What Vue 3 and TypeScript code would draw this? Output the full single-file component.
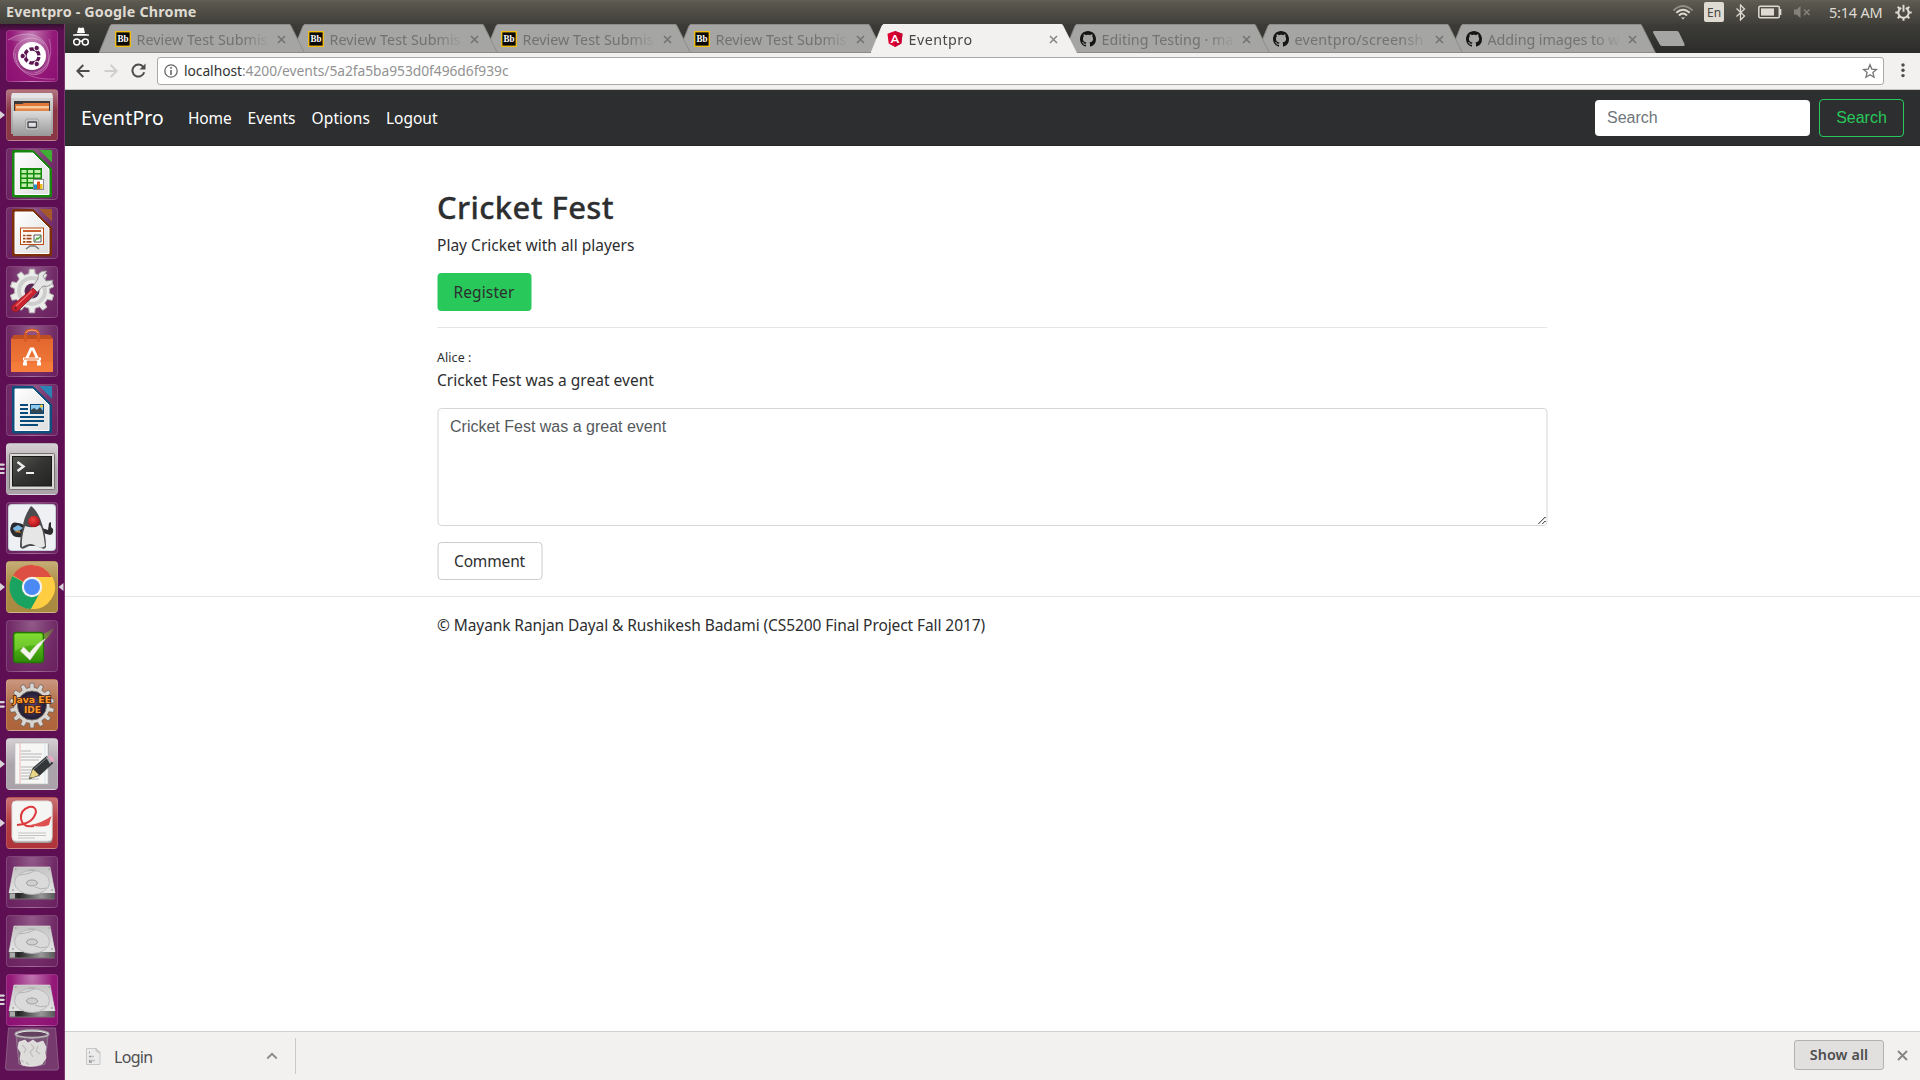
<script setup lang="ts">
import type { Directive } from 'vue'

// Sets the tracking of a label so that it takes the given width in pixels.
const vFit: Directive<HTMLElement, number> = {
  mounted(el, binding) {
    const count = (el.textContent ?? '').trim().length
    const natural = el.getBoundingClientRect().width
    el.style.letterSpacing = `${((binding.value - natural) / count).toFixed(3)}px`
  },
}

interface Tab { title: string; icon: 'bb' | 'ng' | 'gh'; width: number; active?: boolean }
const tabs: Tab[] = [
  { title: 'Review Test Submis', icon: 'bb', width: 131 },
  { title: 'Review Test Submis', icon: 'bb', width: 131 },
  { title: 'Review Test Submis', icon: 'bb', width: 131 },
  { title: 'Review Test Submis', icon: 'bb', width: 131 },
  { title: 'Eventpro', icon: 'ng', width: 64, active: true },
  { title: 'Editing Testing · ma', icon: 'gh', width: 132 },
  { title: 'eventpro/screensh', icon: 'gh', width: 129 },
  { title: 'Adding images to w', icon: 'gh', width: 132 },
]

interface Tile { kind: string; bg: string; pips?: number; focused?: boolean }
const tiles: Tile[] = [
  { kind: 'dash', bg: 'magenta' },
  { kind: 'files', bg: 'red', pips: 1 },
  { kind: 'calc', bg: 'glass' },
  { kind: 'impress', bg: 'glass' },
  { kind: 'settings', bg: 'glass' },
  { kind: 'software', bg: 'glass' },
  { kind: 'writer', bg: 'glass' },
  { kind: 'terminal', bg: 'grey', pips: 3 },
  { kind: 'duke', bg: 'glass' },
  { kind: 'chrome', bg: 'gold', pips: 1, focused: true },
  { kind: 'check', bg: 'glass' },
  { kind: 'eclipse', bg: 'copper', pips: 2 },
  { kind: 'gedit', bg: 'grey', pips: 1 },
  { kind: 'pdf', bg: 'crimson', pips: 1 },
  { kind: 'disk', bg: 'glass' },
  { kind: 'disk', bg: 'glass' },
  { kind: 'disk', bg: 'magenta', pips: 3 },
]

function gear(cx: number, cy: number, outer: number, inner: number, teeth: number): string {
  const step = (Math.PI * 2) / teeth
  const points: string[] = []
  for (let i = 0; i < teeth; i++) {
    const a = i * step - Math.PI / 2
    const corners: [number, number][] = [
      [-0.29, inner], [-0.19, outer], [0.19, outer], [0.29, inner],
    ]
    for (const [o, r] of corners) {
      points.push(`${(cx + r * Math.cos(a + o * step)).toFixed(2)} ${(cy + r * Math.sin(a + o * step)).toFixed(2)}`)
    }
  }
  return `M${points.join('L')}Z`
}
const docColors: Record<string, string[]> = {
  calc: ['#16860f', '#3fae35'],
  impress: ['#7c3009', '#a4582c'],
  writer: ['#0d4f7d', '#2a83b5'],
}
</script>

<template>
  <div class="desktop">
    <svg class="defs" width="0" height="0">
      <defs>
        <linearGradient id="metal" x1="0" y1="0" x2="0" y2="1"><stop offset="0" stop-color="#dcdcdc" /><stop offset="1" stop-color="#989898" /></linearGradient>
        <linearGradient id="plate" x1="0" y1="0" x2="0" y2="1"><stop offset="0" stop-color="#c4c4c4" /><stop offset="1" stop-color="#e4e4e4" /></linearGradient>
        <linearGradient id="paper" x1="0" y1="0" x2="1" y2="1"><stop offset="0" stop-color="#fff" /><stop offset="1" stop-color="#dedede" /></linearGradient>
        <linearGradient id="screen" x1="0" y1="0" x2="1" y2="1"><stop offset="0" stop-color="#55564f" /><stop offset=".5" stop-color="#343533" /><stop offset="1" stop-color="#232422" /></linearGradient>
        <linearGradient id="bag" x1="0" y1="0" x2="0" y2="1"><stop offset="0" stop-color="#e0652f" /><stop offset="1" stop-color="#f47a38" /></linearGradient>
        <linearGradient id="green" x1="0" y1="0" x2="0" y2="1"><stop offset="0" stop-color="#6ed51f" /><stop offset="1" stop-color="#2f8c08" /></linearGradient>
        <linearGradient id="streak" x1="0" y1="1" x2="1" y2="0"><stop offset="0" stop-color="#72c414" /><stop offset="1" stop-color="#72c414" stop-opacity=".1" /></linearGradient>
        <linearGradient id="rim" x1="0" y1="0" x2="1" y2="0"><stop offset="0" stop-color="#666" /><stop offset=".2" stop-color="#222" /><stop offset=".7" stop-color="#999" /><stop offset="1" stop-color="#555" /></linearGradient>
        <radialGradient id="ball" cx=".4" cy=".35" r=".6"><stop offset="0" stop-color="#f3443f" /><stop offset="1" stop-color="#b01218" /></radialGradient>
        <radialGradient id="planet"><stop offset="0" stop-color="#584877" /><stop offset="1" stop-color="#1e1930" /></radialGradient>
      </defs>
    </svg>

    <header class="panel">
      <span class="window-title"><span v-fit="190.5">Eventpro - Google Chrome</span></span>
      <div class="indicators">
        <svg class="wifi" width="22" height="16" viewBox="0 0 22 16" fill="none" stroke="#dfdbd2" stroke-width="1.9">
          <path d="M1.5 6.5Q11-2.5 20.500 6.500" stroke="#908d85" /><path d="M4.300 8.800Q11 2.500 17.700 8.800" /><path d="M7 11.500Q11 7.700 15 11.500" /><path d="M9 13.500h4l-2 2z" fill="#dfdbd2" stroke="none" />
        </svg>
        <span class="lang">En</span>
        <svg class="bluetooth" width="11" height="17" viewBox="0 0 11 17" fill="none" stroke="#dfdbd2" stroke-width="1.3"><path d="M1.500 4.500l8 7.500-4 4V1l4 4-8 7.500" /></svg>
        <svg class="battery" width="25" height="14" viewBox="0 0 25 14"><rect x=".8" y="1.300" width="20.500" height="11.400" rx="1.500" fill="none" stroke="#dfdbd2" stroke-width="1.500" /><path d="M22.500 4v6" stroke="#dfdbd2" stroke-width="1.700" /><rect x="3" y="3.400" width="13" height="7.200" fill="#dfdbd2" /></svg>
        <svg class="muted" width="19" height="14" viewBox="0 0 19 14" fill="#85827a"><path d="M1 4.500h2.500L7.500 1v12l-4-3.500H1z" /><path d="M11 4.500l5.500 5.500m0-5.500L11 10" stroke="#85827a" stroke-width="1.500" /></svg>
        <span class="clock"><span v-fit="53.5">5:14 AM</span></span>
        <svg class="power" width="17" height="17" viewBox="0 0 17 17" fill="none" stroke="#dfdbd2"><path d="M6.300 3.900A5.200 5.200 0 1 0 10.700 3.900" stroke-width="2" /><path d="M8.500 .8v7" stroke-width="1.900" /><path d="M.3 8.500h2.700m11 0h2.700M2.700 2.700l2 2M14.300 2.700l-2 2M2.700 14.300l2-2m7.600 0l2 2M8.500 14v2.700" stroke-width="2" /></svg>
      </div>
    </header>

    <div class="workspace">
      <nav class="launcher">
        <div v-for="(tile, i) in tiles" :key="i" class="tile" :class="tile.bg">
          <svg v-if="tile.pips" class="pips" width="6" height="14" viewBox="0 0 6 14" fill="#d9d3d8">
            <path v-if="tile.pips === 1" d="M0 3l5 4-5 4z" />
            <path v-else-if="tile.pips === 2" d="M0 3h4l1 1-1 1.200H0zM0 7.500h4l1 1-1 1.200H0z" />
            <path v-else d="M0 1.500h4l1 1-1 1.200H0zM0 5.700h4l1 1-1 1.200H0zM0 9.900h4l1 1-1 1.200H0z" />
          </svg>
          <svg v-if="tile.focused" class="focus" width="6" height="14" viewBox="0 0 6 14"><path d="M5.500 3l-5 4 5 4z" fill="#d9d3d8" /></svg>
          <svg class="art" width="52" height="52" viewBox="0 0 52 52">
            <g v-if="tile.kind === 'dash'">
              <path d="M2 10C24-4 45 8 43 30C42 42 30 48 22 43C12 40 4 28 9 18C13 8 30 4 38 14" fill="#fff" fill-opacity=".16" stroke="#fff" stroke-opacity=".3" />
              <path d="M9 23C10 42 24 50 49 49M43 9C48 24 42 40 29 43" fill="none" stroke="#fff" stroke-opacity=".28" />
              <circle cx="26" cy="27.500" r="14" fill="#3a0833" opacity=".35" /><circle cx="26" cy="26" r="14" fill="#fff" />
              <circle cx="26" cy="26" r="7" fill="none" stroke="#5d1751" stroke-width="3.400" stroke-dasharray="12.660 2" stroke-dashoffset="-1" />
              <g fill="#5d1751" stroke="#fff" stroke-width="1"><circle cx="16.700" cy="26" r="2.700" /><circle cx="30.700" cy="18" r="2.700" /><circle cx="30.700" cy="34" r="2.700" /></g>
            </g>
            <g v-else-if="tile.kind === 'files'">
              <path d="M5 11L6 4h40l1 7v34H5z" fill="url(#metal)" /><path d="M5 9L6 4h40l1 5z" fill="#e4e4e4" />
              <rect x="8" y="12" width="36" height="10" fill="#3c3b39" />
              <path d="M9 15h7l2-1h25v8H9z" fill="#e07638" /><path d="M10 17h33v5H10z" fill="#f2a264" /><path d="M10 18h33" stroke="#fff2dc" stroke-width="1" /><path d="M10 21h33" stroke="#d46a2a" />
              <path d="M7 22h38v25H7z" fill="url(#metal)" /><rect x="19.500" y="30" width="13" height="11" rx="2" fill="#c9c9c9" stroke="#a2a2a2" /><rect x="22" y="33" width="8.500" height="5.500" rx=".6" fill="#e1e1e1" stroke="#42424a" stroke-width="1.300" />
            </g>
            <g v-else-if="docColors[tile.kind]">
              <path d="M7.500 2H27l19 18.500V47.500a2 2 0 0 1-2 2H8a2 2 0 0 1-2-2v-44Q6 2 7.500 2z" :fill="docColors[tile.kind][0]" />
              <path d="M33.500 2H45q1 0 1 1v11.500Q41 10 33.500 2z" :fill="docColors[tile.kind][1]" />
              <path d="M9 5h18l16 16v25.500H9z" fill="url(#paper)" stroke="#fff" />
              <template v-if="tile.kind === 'calc'">
                <rect x="14" y="20" width="22" height="21" fill="#128b0c" /><path d="M15.500 22h5v3h-5zm6.500 0h5v3h-5zm6.500 0h6v3h-6zM15.500 26.500h5v3h-5zm6.500 0h5v3h-5zm6.500 0h6v3h-6zM15.500 31h5v3h-5zm6.500 0h5v3h-5zM15.500 35.500h5v3.500h-5zm6.500 0h5v3.500h-5z" fill="#c1edaa" />
                <rect x="27.500" y="31.500" width="10" height="10" fill="#fff" stroke="#8a8a8a" /><path d="M28 36.500h3v4.500h-3z" fill="#1795c9" /><path d="M31 33.500h3V41h-3z" fill="#d95416" /><path d="M34 36h2.500v5H34z" fill="#ecbd23" />
              </template>
              <template v-else-if="tile.kind === 'impress'">
                <path d="M20 42l4-3h5l4 3" fill="none" stroke="#777" stroke-width="1.500" /><rect x="14.500" y="21" width="23" height="16.500" fill="#fffaf3" stroke="#b94c18" /><path d="M17 24h18" stroke="#c6622d" stroke-width="2" /><path d="M17 28.500h2.500m1 0h5m-8.500 3.200h2.500m1 0h5m-8.500 3.200h2.500m1 0h5" stroke="#9d4a20" stroke-width="1.700" /><path d="M28 28h7v7h-7z" fill="#fff" stroke="#555" /><path d="M29 34l2-3 1 1 3-3" fill="none" stroke="#43a53c" stroke-width="1.300" />
              </template>
              <template v-else>
                <path d="M14 21h8m-8 4h8m-8 4h8M14 33h24M14 37h24M14 41h18" stroke="#0a4c79" stroke-width="2" /><rect x="24.500" y="20.500" width="13" height="9" fill="#8dcaf0" stroke="#0b4a74" /><path d="M25 29v-3l3-2 3 2 3-3 3 4v2z" fill="#334750" /><circle cx="35.500" cy="22" r="1.500" fill="#f1cd3b" />
              </template>
            </g>
            <g v-else-if="tile.kind === 'settings'">
              <path :d="gear(26, 25, 22, 17.5, 10)" fill="#ececeb" stroke="#b7b5b5" /><circle cx="26" cy="25" r="13" fill="none" stroke="#cfcecf" stroke-width="4" /><circle cx="26" cy="25" r="7.500" fill="#5b2653" />
              <path d="M32 13Q31 4 41 5l-4 5 3 5 7-1Q46 22 37 20L22 36l-4-3z" fill="#e5e5e5" stroke="#888" stroke-width=".8" /><path d="M27 22l4 4-19 19q-3 2-6-1-1-4 1-5z" fill="#cb2330" stroke="#8d1420" stroke-width=".8" /><path d="M26 25L10 40" stroke="#ee6a6c" stroke-width="1.300" /><circle cx="9.500" cy="42.500" r="1.400" fill="#772030" />
            </g>
            <g v-else-if="tile.kind === 'software'">
              <path d="M5 14l3-4h36l3 4v33H5z" fill="url(#bag)" /><path d="M5 14l3-4h36l3 4z" fill="#bf4e20" /><path d="M5 37h42v10H5z" fill="#ff9147" opacity=".25" /><path d="M19.500 17V9q0-4 6.500-4t6.500 4v8" fill="none" stroke="#d65924" stroke-width="2.500" /><path d="M20 8q1-3 6-3t6 3" fill="none" stroke="#f9a273" />
              <path d="M18.500 38L25 24h2l6.500 14M17 34h18M17 39h4m10 0h4" fill="none" stroke="#fff" stroke-width="2.800" /><path d="M18 34h15" stroke="#f06c2c" />
            </g>
            <g v-else-if="tile.kind === 'terminal'">
              <rect x="3.500" y="10.500" width="45" height="36" rx="1" fill="#dbdad8" stroke="#75716f" /><rect x="6.500" y="13.500" width="39" height="29.500" fill="url(#screen)" stroke="#171917" /><path d="M11.500 19l6 4.500-6 4.500" fill="none" stroke="#f0f0f0" stroke-width="2.400" /><path d="M20 30h8" stroke="#f0f0f0" stroke-width="2" />
            </g>
            <g v-else-if="tile.kind === 'duke'">
              <rect x="2" y="2" width="48" height="47" rx="4" fill="#c5ccd6" /><rect x="3" y="3" width="46" height="45" rx="3" fill="#eff0f4" />
              <path d="M5 24q1-5 7-3 6 0 8 6l-4 8q-8 1-10-3-3-4-1-8z" fill="#292b30" /><path d="M7 26l5-3 5 3-4 3q-5 1-6-3z" fill="#79b7e5" /><path d="M8 30l5-2 2 3z" fill="#bd7b34" />
              <path d="M36 26l6 2 1-7 2-1v5l2 2q1 5-3 6l-7-2z" fill="#2c2c2e" /><path d="M25 4Q17 16 17 25q-3 9-3 20 2 3 5 1l4-2 7 0 5 2q4 2 5-1 0-12-4-23Q32 9 25 4z" fill="#4c4c4e" /><path d="M19 24q-4 12-3 21 8-5 12-2 7 5 11 1-2-18-5-21-7 4-15 1z" fill="#e6e6e6" /><circle cx="28" cy="19.500" r="5.800" fill="url(#ball)" />
            </g>
            <g v-else-if="tile.kind === 'chrome'">
              <circle cx="26" cy="26" r="22" fill="#ffcd42" /><path d="M26 26L7 14.500A22 22 0 0 1 45.500 16H26z" fill="#dd4f43" /><path d="M26 26L6.500 15A22 22 0 0 0 25 48l9.500-17z" fill="#1aa261" /><path d="M26 16h20.500A22 22 0 0 1 25 48l9.500-17z" fill="#ffcd42" /><circle cx="26" cy="26" r="10.200" fill="#f1f1f1" /><circle cx="26" cy="26" r="8" fill="#4b89f4" />
            </g>
            <g v-else-if="tile.kind === 'check'">
              <path d="M33 25Q44 17 49 7q-7 5-14 8z" fill="url(#streak)" /><rect x="7.500" y="12.500" width="30" height="30" rx="3" fill="url(#green)" stroke="#247407" stroke-width="1.300" /><path d="M9 14h27v12q-14-3-27 5z" fill="#a1e953" opacity=".4" /><path d="M14.500 31l3-4 6 6Q30 24 39 19L24 40z" fill="#f6f6ef" stroke="#dadad0" stroke-width=".8" />
            </g>
            <g v-else-if="tile.kind === 'eclipse'">
              <path :d="gear(26, 26.500, 22.5, 18, 14)" fill="#d8d5d1" stroke="#655f5b" stroke-width=".7" /><circle cx="26" cy="26.500" r="14.500" fill="url(#planet)" stroke="#746d69" />
              <g class="badge-text"><text x="7" y="23.500" textLength="38" lengthAdjust="spacingAndGlyphs">Java EE</text><text x="18" y="33.500" textLength="17" lengthAdjust="spacingAndGlyphs">IDE</text></g>
            </g>
            <g v-else-if="tile.kind === 'gedit'">
              <path d="M10 6h33v41H10z" fill="#aaa8a9" /><path d="M9 5h33v41H9z" fill="#f6f6f5" stroke="#bbb" stroke-width=".6" /><path d="M14 5v41" stroke="#eeb6b1" /><path d="M39 5v41" stroke="#d5e6ef" /><path d="M15 13h10m-10 3h21m-21 3h20m-20 3h18m-18 7h13m-13 3h18m-18 3h9m-9 3h19m-19 3h18" stroke="#a6a6a6" stroke-width=".8" /><path d="M27 30L41 18l6 7-13 12-11 4z" fill="#33373a" stroke="#1d1d1d" stroke-width=".5" /><path d="M40 19l3-2 4 5-3 4z" fill="#b3b0b3" /><path d="M42 18q3-2 6 4-1 3-2 2z" fill="#f0a7c4" /><path d="M27 31l6 6-10 4z" fill="#ead586" /><path d="M25 39l-2 2 3-1z" fill="#222" /><path d="M28 31l14-12" stroke="#858a8b" />
            </g>
            <g v-else-if="tile.kind === 'pdf'">
              <rect x="6.500" y="5" width="40" height="41" rx="4" fill="#9e9d9b" /><rect x="6" y="4" width="40" height="40" rx="4" fill="#f5f5f3" stroke="#ddd" />
              <path d="M11 28Q27 27 30 15Q30 9 23 10Q14 13 15 22Q17 31 28 29" fill="none" stroke="#dc3a3d" stroke-width="2" /><path d="M24 28Q36 26 45.500 19L43 28Q36 31 24 28z" fill="#df5050" /><path d="M12 36h28m-28 2.500h28m-28 2.500h17" stroke="#c4c4c2" />
            </g>
            <g v-else-if="tile.kind === 'disk'">
              <path d="M8 12h36l5 24v6q0 1.500-2 1.500H5q-2 0-2-1.500v-6z" fill="#757575" /><path d="M8 11h36l5 26H3z" fill="url(#plate)" stroke="#dedede" stroke-width=".6" /><path d="M3 37h46v5.500H3z" fill="url(#rim)" /><path d="M4 37.500h5v5H4z" fill="#aaa" /><ellipse cx="26" cy="26.500" rx="17.500" ry="12" fill="#dadada" stroke="#b2b2b2" stroke-width=".8" /><path d="M13 19Q25 18 29 14h-7M41 32q-7 2-12-1" fill="none" stroke="#aaa" stroke-width=".8" /><ellipse cx="26" cy="27" rx="5.500" ry="3" fill="#cfcfcf" stroke="#9f9f9f" /><path d="M6 34h2m37 0h2M9 13h1.500m32 0H44" stroke="#888" />
            </g>
          </svg>
        </div>
        <svg class="trash" width="54" height="44" viewBox="0 0 54 44">
          <path d="M3.500 1h47L53.500 41q0 2-2 2h-49q-2 0-2-2z" fill="#763a6e" stroke="#8c5a87" /><path d="M11 8l3 29q13 5 26 0l3-29z" fill="#7c6279" opacity=".65" stroke="#a59aa4" />
          <path d="M14 15l6-2 3 3 5-3 4 3 6-2 3 6-1 6 1 5-4 6q-9 4-20 1l-2-6 1-6-3-5z" fill="#dedcda" stroke="#f6f6f6" stroke-width=".6" /><path d="M17 18l4 4-2 4m7-9l3 4-4 4 3 5m5-11l-2 5 4 3m-14 8l3 3m-8-5l3 2" fill="none" stroke="#c0bcbd" stroke-width="1.200" /><ellipse cx="27" cy="7" rx="16.500" ry="3.700" fill="#62415e" stroke="#b3b1b1" stroke-width="2" /><path d="M11 7q5-3 16-3t16 3" fill="none" stroke="#e3e3e3" />
        </svg>
      </nav>

      <main class="browser">
        <div class="tabstrip">
          <svg class="incognito" width="18" height="21" viewBox="0 0 18 21"><path d="M5 6l1.200-5q.2-.8 1-.5L9 1l1.800-.5q.8-.3 1 .5L13 6zM1 7.500Q9 6 17 7.500v1.300H1z" fill="#fff" /><g fill="none" stroke="#fff" stroke-width="1.500"><circle cx="4.700" cy="15" r="3" /><circle cx="13.300" cy="15" r="3" /><path d="M7.500 14.500q1.500-1 3 0" /></g></svg>
          <div v-for="(tab, i) in tabs" :key="i" class="tab" :class="{ active: tab.active }" :style="{ zIndex: tab.active ? 20 : 10 - i }">
            <svg class="shape" width="207" height="29" viewBox="0 0 207 29"><path class="fill" d="M0 29L11 2q1-2 2-2H190q1.500 0 2 2L205.500 29z" /><path class="edge" d="M0 29L11 2q1-1.500 2-1.500H190q1.500 0 2 1.500L205.500 29" /><path v-if="!tab.active" class="base" d="M0 28.500h205" /></svg>
            <svg v-if="tab.icon === 'bb'" class="favicon" width="16" height="16" viewBox="0 0 16 16"><rect x=".7" y=".7" width="14.600" height="14.600" fill="#080808" stroke="#efbd16" stroke-width="1.400" /><text x="8" y="11.200" text-anchor="middle" textLength="11" lengthAdjust="spacingAndGlyphs" font-family="'Liberation Serif', serif" font-weight="700" font-size="10" fill="#fff">Bb</text></svg>
            <svg v-else-if="tab.icon === 'ng'" class="favicon" width="16" height="16" viewBox="0 0 16 16"><path d="M8 0l7.500 2.700-1.200 9.900L8 16l-6.300-3.400L.5 2.700z" fill="#dd0031" /><path d="M8 0l7.500 2.700-1.200 9.900L8 16z" fill="#c3002f" /><text x="8" y="12.200" text-anchor="middle" font-family="Lato, sans-serif" font-size="12" font-weight="700" fill="#fff">A</text></svg>
            <svg v-else class="favicon" width="16" height="16" viewBox="0 0 16 16"><path fill="#151515" d="M8 0C3.580 0 0 3.580 0 8c0 3.540 2.290 6.530 5.470 7.590.4.070.55-.17.55-.38 0-.19-.01-.82-.01-1.490-2.010.37-2.530-.49-2.690-.94-.09-.23-.48-.94-.82-1.130-.28-.15-.68-.52-.01-.53.63-.01 1.080.58 1.230.82.72 1.210 1.870.87 2.330.66.070-.52.28-.87.51-1.070-1.780-.2-3.640-.89-3.640-3.950 0-.87.31-1.590.82-2.150-.08-.2-.36-1.020.08-2.120 0 0 .67-.21 2.200.82.64-.18 1.320-.27 2-.27s1.360.09 2 .27c1.530-1.040 2.200-.82 2.200-.82.44 1.100.16 1.920.08 2.120.51.56.82 1.270.82 2.150 0 3.070-1.870 3.750-3.650 3.950.29.25.54.73.54 1.480 0 1.070-.01 1.930-.01 2.200 0 .21.15.46.55.38A8.010 8.010 0 0 0 16 8c0-4.420-3.580-8-8-8z" /></svg>
            <span class="tab-title"><span v-fit="tab.width">{{ tab.title }}</span></span>
            <svg class="tab-close" width="9" height="9" viewBox="0 0 9 9"><path d="M1 1l7 7m0-7L1 8" stroke-width="1.500" /></svg>
          </div>
          <svg class="new-tab" width="34" height="16" viewBox="0 0 34 16"><path d="M2 0h23q1.500 0 2 1.500L32.500 13q.5 2-1 2H10q-2 0-2.500-2L1 1.500Q.7 0 2 0z" fill="#a5a5a3" /></svg>
        </div>

        <div class="toolbar">
          <svg width="14" height="14" viewBox="0 0 14 14" fill="none" stroke="#4c4c4c" stroke-width="1.900"><path d="M13.500 7H1.800M7.300 1L1.300 7l6 6" /></svg>
          <svg class="forward" width="14" height="14" viewBox="0 0 14 14" fill="none" stroke="#cfcecd" stroke-width="1.900"><path d="M.5 7h11.700M6.700 1l6 6-6 6" /></svg>
          <svg class="reload" width="15" height="15" viewBox="0 0 15 15"><path d="M12.300 4A6 6 0 1 0 13.200 9.300" fill="none" stroke="#4c4c4c" stroke-width="2" /><path d="M14.500.5v6h-6z" fill="#4c4c4c" /></svg>
          <div class="omnibox">
            <svg width="14" height="14" viewBox="0 0 14 14" fill="none" stroke="#686868"><circle cx="7" cy="7" r="6.200" stroke-width="1.300" /><path d="M7 6v5M7 3v1.700" stroke-width="1.600" /></svg>
            <span class="url"><span v-fit="324.500"><b>localhost</b>:4200/events/5a2fa5ba953d0f496d6f939c</span></span>
            <svg class="star" width="16" height="16" viewBox="0 0 16 16"><path d="M8 1.800l1.800 4.300 4.700.4-3.600 3.100 1.100 4.600L8 11.700l-4 2.500 1.100-4.600-3.600-3.100 4.700-.4z" fill="none" stroke="#737373" stroke-width="1.300" /></svg>
          </div>
          <svg class="menu" width="4" height="15" viewBox="0 0 4 15" fill="#4c4c4c"><circle cx="2" cy="2" r="1.700" /><circle cx="2" cy="7.300" r="1.700" /><circle cx="2" cy="12.600" r="1.700" /></svg>
        </div>

        <div class="navbar">
          <a class="brand"><span v-fit="83">EventPro</span></a>
          <a class="link"><span v-fit="43.500">Home</span></a>
          <a class="link"><span v-fit="48">Events</span></a>
          <a class="link"><span v-fit="58.500">Options</span></a>
          <a class="link"><span v-fit="51.500">Logout</span></a>
          <input class="search" placeholder="Search" />
          <button class="search-btn">Search</button>
        </div>

        <section class="container event">
          <h2><span v-fit="177">Cricket Fest</span></h2>
          <p><span v-fit="197.500">Play Cricket with all players</span></p>
          <button class="btn register"><span v-fit="61">Register</span></button>
          <hr />
          <div class="author"><span v-fit="34.500">Alice :</span></div>
          <p><span v-fit="217">Cricket Fest was a great event</span></p>
          <textarea value="Cricket Fest was a great event"></textarea>
          <button class="btn comment"><span v-fit="71">Comment</span></button>
        </section>
        <hr class="divider" />
        <footer class="container"><span v-fit="548">© Mayank Ranjan Dayal &amp; Rushikesh Badami (CS5200 Final Project Fall 2017)</span></footer>

        <div class="shelf">
          <svg width="15" height="17" viewBox="0 0 15 17"><path d="M.5.500h9.500l4 4v12H.5z" fill="#ebebeb" stroke="#c8c8c8" /><path d="M10 .5q-1 4 4 4z" fill="#ddd" stroke="#b5b5b5" stroke-width=".7" /><path d="M3 4.500h1m-1 4h2.500m1 0h1M3 12.500h1.500m1 0h1m1 0h1M3 14h3" stroke="#999" stroke-width="1.500" /></svg>
          <span class="download"><span v-fit="38.500">Login</span></span>
          <svg class="chevron" width="12" height="8" viewBox="0 0 12 8"><path d="M1.300 6.500L6 1.800l4.700 4.700" fill="none" stroke="#8b8b8b" stroke-width="1.800" /></svg>
          <i class="separator"></i>
          <button class="show-all"><span v-fit="58.500">Show all</span></button>
          <svg class="close" width="11" height="11" viewBox="0 0 11 11"><path d="M1 1l9 9m0-9l-9 9" stroke="#858585" stroke-width="1.900" /></svg>
        </div>
      </main>
    </div>
  </div>
</template>

<style>
body { margin: 0; overflow: hidden; }
</style>

<style scoped>
* { box-sizing: border-box; }
.desktop { width: 1920px; height: 1080px; display: flex; flex-direction: column; font-family: "Noto Sans", "Open Sans", sans-serif; font-size: 15.5px; line-height: 24px; color: #2d2e2f; background: #fff; white-space: nowrap; }
.defs { position: absolute; }
svg { display: block; flex: none; }
span { display: inline-block; }
button { font: inherit; white-space: nowrap; padding: 0; }
hr { border: 0; height: 1px; background: #e5e5e5; margin: 16px 0; }
p { margin: 0 0 16px; }

.panel { height: 24px; flex: none; display: flex; justify-content: space-between; align-items: center; padding: 0 8px 0 6px; background: linear-gradient(#625f54, #59574e 15%, #403f39); color: #dfdbd2; line-height: 24px; }
.window-title { font-weight: 700; font-size: 14.3px; }
.indicators { display: flex; align-items: center; height: 24px; }
.wifi { margin-left: -1px; }
.lang { margin-left: 10px; width: 20px; height: 20px; background: #dfdbd2; color: #474640; border-radius: 2px; text-align: center; font-size: 12px; line-height: 21px; }
.bluetooth { margin-left: 11px; }
.battery { margin-left: 12px; }
.muted { margin-left: 10px; }
.clock { margin-left: 17px; width: 54px; font-size: 14.5px; line-height: 23px; }
.power { margin-left: 12px; }

.workspace { flex: 1; display: flex; min-height: 0; }
.launcher { width: 65px; flex: none; padding: 6px 0 0 6px; display: flex; flex-direction: column; gap: 7px; background: linear-gradient(#35102f, #5e0e52 7px); border-right: 1px solid #7a3a70; }
.tile { position: relative; width: 52px; height: 52px; flex: none; border-radius: 4px; border: 1px solid rgba(255, 255, 255, .14); }
.art { margin: -1px; }
.badge-text { font: 700 8.3px "DejaVu Sans", sans-serif; fill: #ff9c2c; stroke: #4a200c; stroke-width: 1.5px; paint-order: stroke; }
.pips { position: absolute; left: -7px; top: 18px; }
.focus { position: absolute; right: -7px; top: 18px; }
.glass { background: radial-gradient(ellipse at 50% 0, rgba(255, 255, 255, .32), rgba(255, 255, 255, .12) 65%, rgba(255, 255, 255, .08)); }
.magenta { background: radial-gradient(ellipse at 50% 0, #bf78b0, #941979 60%, #8a0f70); }
.red { background: linear-gradient(#b27581, #8b3645 40%, #8b3645); }
.grey { background: linear-gradient(#d5d0d4, #ada5ac 50%, #aaa2a8); }
.gold { background: linear-gradient(#c5ac77, #ad8c42 45%, #a98840); }
.copper { background: linear-gradient(#c99780, #b36b43 50%, #ad6439); }
.crimson { background: linear-gradient(#ca7272, #b43b40 50%, #ae3439); }
.trash { margin: -6px 0 0 -1px; }

.browser { flex: 1; min-width: 0; display: flex; flex-direction: column; }
.tabstrip { height: 29px; flex: none; display: flex; align-items: center; padding-left: 7px; background: linear-gradient(#3d3c39, #2c2c2a); isolation: isolate; }
.incognito { margin: -2px 8.5px 0 0; }
.tab { position: relative; width: 193px; height: 29px; flex: none; display: flex; align-items: center; padding-left: 16px; color: #727270; }
.shape { position: absolute; left: 0; top: 0; }
.shape .fill { fill: #a5a5a3; }
.shape .edge { fill: none; stroke: #8b8a88; stroke-width: .9; }
.shape .base { stroke: #8c8b88; }
.active .shape .fill { fill: #f2f1f0; }
.active .shape .edge { stroke: #f2f1f0; }
.favicon { position: relative; }
.tab-title { position: relative; width: 132px; margin-left: 6px; font-size: 14.3px; line-height: 27px; padding-top: 1px; -webkit-mask-image: linear-gradient(90deg, #000 80%, rgba(0, 0, 0, .12) 99%); mask-image: linear-gradient(90deg, #000 80%, rgba(0, 0, 0, .12) 99%); }
.tab-close { position: relative; margin: 1px 0 0 8px; stroke: #727270; }
.active { color: #48484a; }
.active .tab-close { stroke: #858585; }
.new-tab { margin: 1px 0 0 9.5px; }

.toolbar { height: 37px; flex: none; display: flex; align-items: center; padding: 0 15px 1px 11px; background: #f2f1f0; border-bottom: 1px solid #c4c4c0; }
.forward { margin-left: 14px; }
.reload { margin-left: 13px; }
.omnibox { margin: 0 17px 0 11px; flex: 1; height: 28px; display: flex; align-items: center; padding: 0 5px 0 6px; border: 1px solid #a9a8a7; border-radius: 3px; background: #fff; }
.url { margin-left: 6px; font-size: 13.8px; color: #929292; }
.url b { font-weight: 400; color: #333; }
.star { margin-left: auto; }

.navbar { height: 56px; flex: none; display: flex; align-items: center; padding: 0 16px; background: #2d2e30; border-bottom: 1px solid #29232a; color: #fff; }
.brand { width: 107px; font-size: 19.3px; }
.link { margin-right: 16px; }
.search { margin-left: auto; width: 215px; height: 36px; border: 0; border-radius: 4px; padding: 0 12px; font: 16px "Liberation Sans", sans-serif; background: #fff; }
.search::placeholder { color: #6f757b; opacity: 1; }
.search-btn { margin-left: 9px; width: 85px; height: 38px; border: 1px solid #28c85a; border-radius: 4px; background: transparent; color: #28c85a; font: 16px "Liberation Sans", sans-serif; }

.container { width: 1110px; margin: 0 auto; transform: translateX(-.5px); flex: none; }
.event { padding-top: 41px; }
h2 { margin: 0 0 8px; height: 38px; font-size: 31px; line-height: 40px; font-weight: 500; -webkit-text-stroke: .3px #2d2e2f; }
.btn { display: block; height: 38px; border-radius: 4px; text-align: center; color: #2d2e2f; }
.register { width: 94px; background: #28c85a; border: 0; }
.author { font-size: 12.4px; height: 24px; line-height: 28px; }
textarea { display: block; width: 1110px; height: 118px; border: 1px solid #d6d6d6; border-radius: 4px; padding: 6px 12px; font: 16px/24px "Liberation Sans", sans-serif; color: #55595c; background: #fff; resize: vertical; }
.comment { margin-top: 16px; width: 105px; background: #fff; border: 1px solid #ccc; }
.divider { width: 100%; flex: none; }

.shelf { margin-top: auto; height: 49px; flex: none; display: flex; align-items: center; padding: 0 12px 0 21px; background: #f2f1f0; border-top: 1px solid #d0cfcd; color: #4e4e50; }
.download { margin-left: 13px; width: 40px; font-size: 16px; padding-top: 2px; }
.chevron { margin-left: 112px; }
.separator { margin-left: 17px; width: 1px; height: 36px; background: #cbcac8; }
.show-all { margin: -2px 0 0 auto; width: 90px; height: 30px; border: 1px solid #b2b1af; border-radius: 3px; background: #e1e0df; color: #4e4e50; font-size: 14.3px; font-weight: 600; line-height: 26px; }
.close { margin: -2px 0 0 13px; }
</style>
